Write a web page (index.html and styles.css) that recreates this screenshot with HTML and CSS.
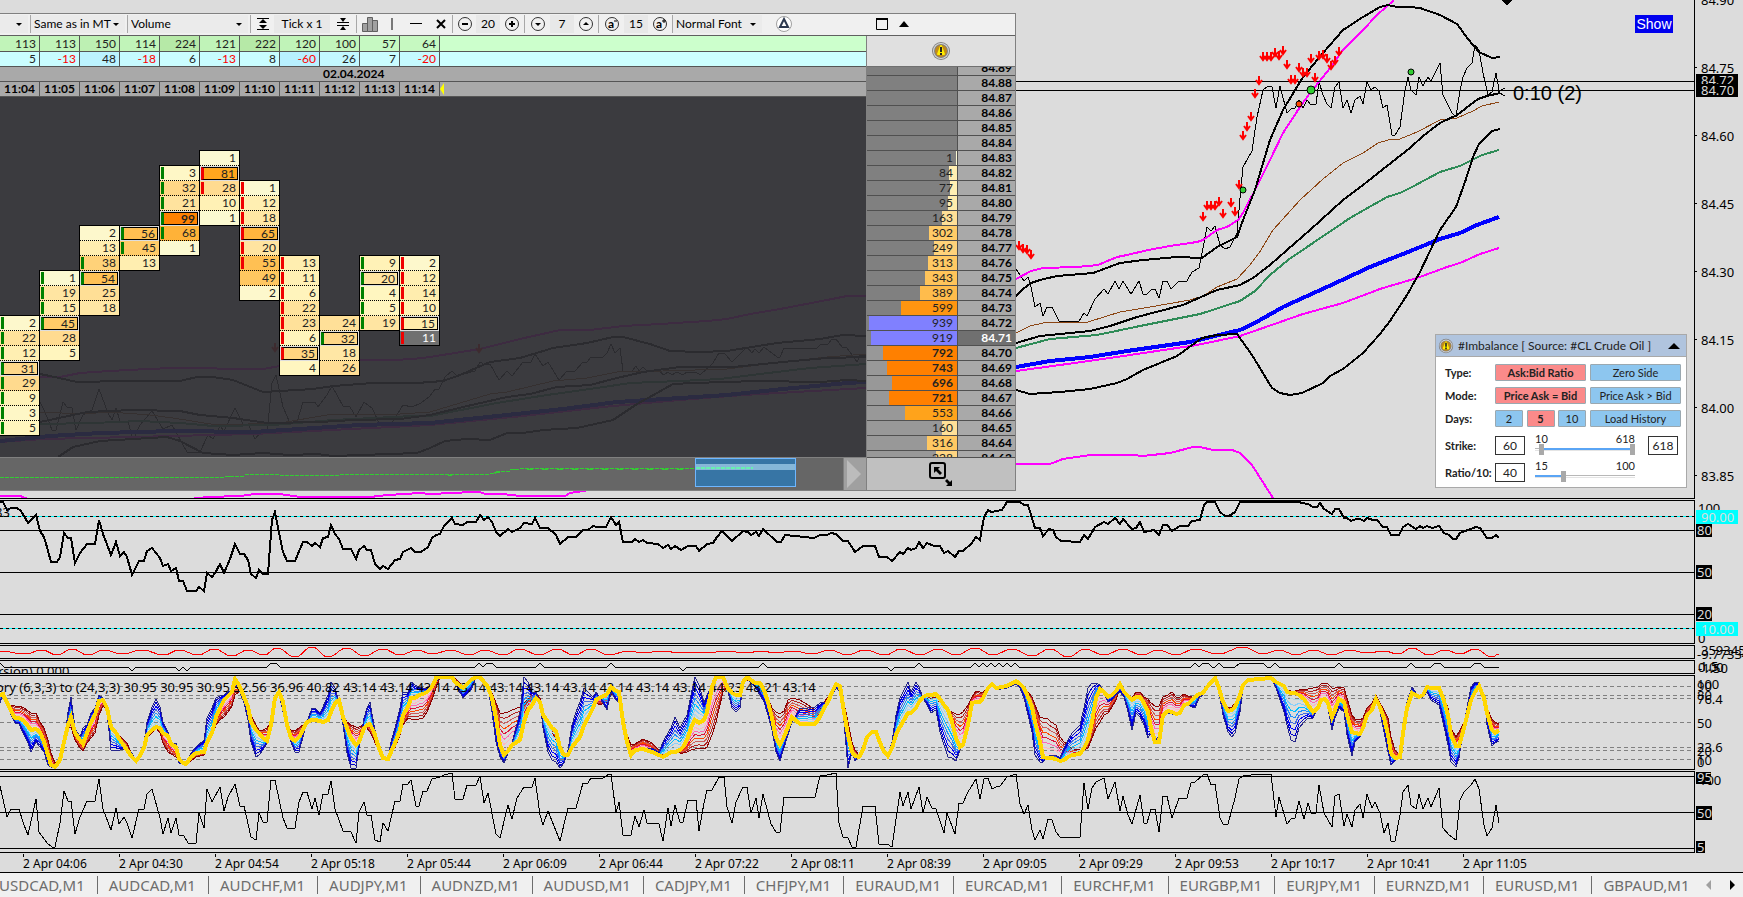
FILE: index.html
```
<!DOCTYPE html>
<html lang="en">
<head>
    <meta charset="UTF-8">
    <meta name="viewport" content="width=device-width, initial-scale=1.0">
    <title>Crude Oil M1</title>
    <link rel="stylesheet" href="styles.css">
</head>
<body>
    <svg class="defs" width="0" height="0">
        <defs>
            <path id="arrow" d="M0 -4V4M-3 0L0 4L3 0" fill="none" stroke="#ff0000" stroke-width="2"/>
            <g id="alert">
                <circle cx="10" cy="10" r="9" fill="#808080"/>
                <circle cx="10" cy="10" r="8" fill="#d8d8d8"/>
                <circle cx="10" cy="10" r="7" fill="#808080"/>
                <circle cx="10" cy="10" r="6" fill="#c08a1c"/>
                <path d="M10 5L13 13H7Z" fill="#ffee00" stroke="#ffee00" stroke-width="2" stroke-linejoin="round"/>
                <path d="M10 6V11M10 12V14" stroke="#222222" stroke-width="2"/>
            </g>
        </defs>
    </svg>

    <main class="charts">
        <section class="panel main-panel">
            <svg class="plot">
                <g class="lines">
                    <!-- price -->
                    <polyline class="thin" points="40,402 45,412 52,430 56,430 63,402 67,407 72,408 76,430 83,415 92,410 99,389 108,413 112,420 116,408 120,421 128,421 133,440 140,425 152,411 163,429 172,425 187,452 200,452 208,435 213,439 220,426 224,431 235,408 243,424 248,424 255,439 260,433 267,434 272,383 276,375 283,407 290,423 297,422 303,402 315,402 318,407 327,395 332,386 343,406 350,407 356,417 364,402 372,408 380,425 392,423 403,405 412,407 421,403 430,396 435,389 439,389 445,377 452,371 457,376 475,371 480,362 485,365 490,364 499,380 507,371 512,376 523,362 531,362 535,354 543,366 548,362 559,380 567,371 575,371 583,362 587,362 591,357 603,357 607,353 611,344 615,353 620,348 623,371 632,371 636,366 639,371 643,367 647,371 660,372 664,375 668,372 672,375 677,372 683,375 687,372 696,372 700,375 713,363 719,353 725,354 732,362 747,347 752,353 755,349 759,353 764,347 777,357 780,357 784,348 817,348 820,345 828,344 832,339 836,339 842,347 847,348 857,362 860,355 866,355"/>
                    <polyline class="thin" points="1016,269 1024,281 1028,277 1031,287 1035,307 1040,303 1043,316 1047,307 1052,307 1059,321 1079,321 1084,313 1087,316 1095,299 1104,289 1108,294 1115,281 1119,289 1123,281 1131,294 1139,281 1143,294 1147,294 1152,289 1155,289 1159,298 1163,281 1167,281 1171,289 1179,281 1187,281 1192,272 1199,268 1203,248 1207,227 1211,231 1215,226 1220,245 1225,249 1230,247 1237,233 1241,187 1243,167 1252,151 1257,117 1263,90 1268,86 1272,87 1276,108 1280,86 1287,113 1292,108 1295,108 1299,100 1303,108 1307,100 1311,105 1316,104 1319,82 1323,95 1327,104 1331,108 1335,87 1339,82 1343,108 1347,100 1351,113 1355,100 1360,96 1363,104 1367,82 1371,90 1375,87 1379,91 1383,108 1387,105 1392,135 1395,135 1400,127 1405,90 1408,77 1411,90 1416,95 1419,77 1423,86 1428,77 1431,81 1440,63 1443,95 1452,113 1456,117 1460,90 1463,77 1467,68 1472,63 1475,45 1479,50 1483,73 1488,95 1492,92 1496,73 1499,90"/>
                    <!-- moving averages -->
                    <polyline class="thin brown" points="0,418 40,412 83,414 110,412 150,415 173,418 217,425 280,423 333,414 400,414 430,412 490,394 507,392 553,381 587,378 617,372 663,371 727,369 783,362 827,357 866,354 940,345 1016,333 1030,326 1043,323 1060,322 1088,322 1120,312 1150,307 1190,300 1203,296 1217,287 1237,279 1250,265 1261,250 1273,230 1300,200 1323,179 1343,163 1363,153 1378,143 1388,140 1400,139 1417,132 1440,120 1457,118 1473,111 1482,106 1499,102"/>
                    <polyline class="green" points="0,428 40,424 93,423 140,421 180,423 213,426 273,425 333,420 413,416 430,416 497,403 547,395 597,388 630,383 680,381 720,379 760,374 810,368 866,364 1016,348 1050,339 1097,335 1140,326 1200,314 1240,301 1255,291 1270,275 1288,260 1310,245 1350,218 1387,197 1400,193 1412,187 1440,172 1460,166 1482,155 1499,150"/>
                    <polyline class="magenta" points="0,442 43,439 133,437 253,434 430,425 523,416 603,407 680,400 743,395 866,388 1016,371 1060,365 1110,358 1197,345 1240,336 1263,328 1303,314 1343,303 1380,289 1390,286 1417,278 1447,267 1460,263 1480,254 1499,248"/>
                    <polyline class="blue" points="0,441 50,436 100,433 140,432 173,431 253,432 300,429 360,425 430,423 507,415 563,409 617,402 680,398 727,395 783,389 847,383 866,382 1016,367 1050,361 1090,357 1127,351 1190,342 1240,330 1253,324 1283,307 1327,287 1370,267 1390,259 1403,254 1440,239 1460,233 1477,225 1499,217"/>
                    <polyline points="0,432 40,422 87,412 133,410 180,411 200,415 233,418 267,423 320,422 353,420 400,419 430,415 463,407 507,397 530,394 557,387 590,385 617,378 643,372 680,367 733,367 783,362 827,358 866,357 1016,343 1040,336 1090,331 1110,326 1137,317 1183,305 1217,290 1240,285 1253,278 1270,265 1287,250 1310,230 1343,200 1363,185 1387,166 1410,148 1423,136 1440,123 1457,115 1478,99 1487,96 1500,93"/>
                    <!-- bands -->
                    <polyline class="magenta" points="0,380 40,377 60,377 80,373 110,371 147,369 173,368 200,368 233,369 263,369 280,366 333,362 360,360 393,360 413,359 430,357 480,349 520,339 560,330 590,330 623,326 660,324 707,321 727,319 750,314 780,309 827,300 847,296 866,296 1016,279 1031,271 1043,268 1077,267 1098,265 1117,257 1127,255 1148,250 1170,246 1197,242 1203,240 1217,230 1227,227 1238,220 1243,213 1255,190 1270,160 1283,133 1300,107 1310,93 1327,72 1343,50 1363,30 1377,15 1394,0"/>
                    <polyline points="0,370 40,374 50,376 77,382 123,381 180,381 197,377 213,377 233,380 263,392 280,391 313,389 333,386 373,383 417,383 443,381 460,375 490,362 520,358 553,348 587,343 613,337 623,337 650,344 670,351 700,352 727,351 777,343 820,339 843,335 866,336 1016,296 1023,289 1031,283 1040,280 1057,276 1093,273 1120,263 1143,260 1177,257 1202,258 1217,247 1237,237 1243,220 1255,190 1270,140 1283,110 1303,77 1323,53 1343,30 1363,17 1380,7 1388,5 1397,7 1410,7 1420,8 1440,15 1457,24 1468,39 1479,52 1492,58 1500,57"/>
                    <polyline points="58,457 73,447 100,441 133,439 167,437 180,441 203,453 233,455 263,453 290,455 317,454 333,456 417,453 430,448 445,441 467,439 490,440 507,433 523,433 543,430 577,428 613,420 637,404 657,393 673,384 693,383 757,381 820,382 847,380 866,381 1016,390 1030,394 1060,392 1090,389 1117,383 1127,379 1143,370 1177,356 1202,338 1217,335 1237,334 1252,355 1272,388 1280,393 1290,395 1302,393 1323,383 1330,376 1343,369 1363,353 1380,334 1390,321 1407,295 1420,272 1440,230 1456,207 1465,182 1473,157 1479,144 1492,131 1500,129"/>
                    <polyline class="magenta" points="0,496 20,496 28,499 190,499 208,497 240,496 255,494 280,494 300,497 370,497 388,495 420,493 430,494 473,492 480,492 485,494 503,494 520,496 565,496 570,493 583,491 700,470 860,464 1016,464 1050,464 1063,459 1090,455 1133,455 1143,456 1170,453 1193,447 1200,447 1213,450 1232,450 1240,453 1252,465 1273,498"/>
                    <path class="thin" d="M1016 81.500H1694M1016 90.500H1694"/>
                </g>
                <g id="arrows"></g>
                <g stroke="#000000" fill="#32cd32">
                    <circle cx="1243" cy="190" r="3"/>
                    <circle cx="1311" cy="90" r="4"/>
                    <circle cx="1411" cy="72" r="3"/>
                    <circle cx="1299" cy="104" r="3" fill="#ff4500"/>
                </g>
                <path d="M1501 0H1512L1507 5Z"/>
                <path d="M1505 88L1498 92L1505 96" fill="none" stroke="#000000"/>
                <text class="countdown" x="1513" y="100">0:10 (2)</text>
            </svg>
            <div class="axis price-axis">
                <span>84.90</span><span>84.75</span><span>84.60</span><span>84.45</span><span>84.30</span><span>84.15</span><span>84.00</span><span>83.85</span>
                <b class="tag ask">84.72</b>
                <b class="tag bid">84.70</b>
            </div>
            <button class="show" type="button">Show</button>
        </section>

        <section class="panel rsi">
            <svg class="plot">
                <path class="level" d="M0 29.500H1694M0 71.500H1694M0 113.500H1694"/>
                <path d="M0 15.500H1694M0 127.500H1694" stroke="#00ffff"/>
                <path d="M0 15.500H1694M0 127.500H1694" stroke="#000000" stroke-dasharray="3 3"/>
                <text x="-5" y="16">83</text>
                <polyline class="heavy" points="0,1 3,1 7,9 11,7 17,7 21,10 28,22 36,14 40,30 44,36 47,46 51,61 57,61 60,56 64,32 68,37 71,37 75,62 80,52 87,43 95,43 99,19 103,33 111,54 116,41 120,55 124,51 127,56 132,74 139,60 144,60 147,50 152,47 160,57 163,65 168,63 171,70 176,67 179,80 183,80 187,90 196,90 199,86 204,90 207,72 212,76 215,72 220,63 224,72 230,58 235,43 240,53 244,53 248,59 251,73 256,77 259,69 263,73 268,73 272,19 275,11 283,51 287,60 295,60 303,41 307,41 312,45 315,42 320,46 323,37 328,36 331,24 335,33 339,38 343,48 351,48 356,58 359,49 364,45 367,49 371,49 375,63 380,68 383,65 388,68 395,59 400,58 403,51 411,47 415,51 421,51 428,46 432,37 436,34 440,33 444,25 452,17 455,23 463,24 467,21 476,21 480,14 484,19 488,16 492,21 496,31 500,35 508,28 512,31 520,27 524,22 532,23 535,17 540,27 548,27 556,34 560,43 568,36 576,36 583,29 588,29 593,25 597,26 606,26 611,16 616,24 619,21 623,41 632,41 635,38 639,41 643,39 647,42 658,43 663,47 668,44 671,48 675,45 681,49 688,45 696,45 699,50 707,43 713,42 717,36 722,30 732,40 743,30 748,31 751,34 756,31 759,35 763,28 777,41 781,41 785,34 814,37 820,34 827,34 831,32 836,33 843,40 848,40 855,51 863,45 875,45 879,56 887,56 892,60 900,51 903,53 908,47 911,49 916,47 919,41 923,47 927,42 934,45 940,45 944,52 948,50 955,56 959,50 963,50 971,43 976,36 980,39 984,16 988,9 991,11 1002,9 1007,1 1020,1 1024,4 1028,4 1035,27 1040,27 1043,35 1049,28 1053,29 1056,36 1061,40 1080,41 1084,34 1088,38 1095,26 1104,21 1108,23 1115,17 1120,23 1123,18 1132,28 1136,27 1140,21 1144,31 1154,29 1159,34 1163,24 1167,24 1172,30 1180,25 1188,25 1192,20 1200,19 1204,4 1207,1 1215,1 1220,11 1225,15 1229,15 1235,11 1240,1 1299,1 1302,2 1308,3 1313,6 1317,6 1320,2 1324,8 1332,13 1335,8 1339,8 1344,17 1347,17 1351,20 1356,18 1360,18 1364,20 1367,17 1373,19 1377,19 1383,26 1387,26 1391,34 1399,34 1403,26 1408,23 1416,28 1420,25 1423,27 1427,25 1432,27 1439,25 1444,32 1449,34 1453,38 1456,38 1460,32 1468,29 1476,26 1480,27 1487,37 1492,37 1496,34 1499,37"/>
            </svg>
            <svg class="axis">
                <text x="3" y="12">100</text>
                <text x="3" y="142">0</text>
                <rect x="1" y="22" width="16" height="14"/><text class="inv" x="2" y="34">80</text>
                <rect x="1" y="64" width="16" height="14"/><text class="inv" x="2" y="76">50</text>
                <rect x="1" y="106" width="16" height="14"/><text class="inv" x="2" y="118">20</text>
                <rect x="1" y="9" width="42" height="14" fill="#00ffff"/><text class="inv" x="6" y="21">90.00</text>
                <rect x="1" y="121" width="42" height="14" fill="#00ffff"/><text class="inv" x="6" y="133">10.00</text>
            </svg>
        </section>

        <section class="panel strip">
            <svg class="plot"><path id="wave" fill="none" stroke="#ff0000"/></svg>
            <svg class="axis"><text x="6" y="9">359345</text><text x="2" y="13">-9.773346</text></svg>
        </section>

        <section class="panel strip">
            <svg class="plot">
                <text x="-2" y="15">rsion) 0.000</text>
                <polyline class="thin" points="0,2 4,6 128,6 132,10 136,6 175,6 179,10 183,6 187,10 191,6 267,6 271,2 276,2 280,6 475,6 479,2 483,6 487,2 492,2 496,6 536,6 540,2 544,6 607,6 611,2 615,6 679,6 683,10 687,6 759,6 763,2 767,6 887,6 891,10 895,6 915,6 919,2 923,6 971,6 975,2 979,6 983,2 987,6 991,2 995,6 999,2 1003,6 1007,2 1011,6 1015,2 1019,6 1191,6 1195,2 1199,6 1203,2 1208,2 1212,6 1215,6 1219,2 1223,6 1235,6 1240,2 1263,2 1267,6 1271,6 1275,2 1279,6 1335,6 1339,2 1343,6 1407,6 1411,2 1415,6 1431,6 1435,2 1440,2 1444,6 1471,6 1475,2 1480,2 1484,6 1499,6"/>
            </svg>
            <svg class="axis"><text x="5" y="10">1.5</text><text x="3" y="11">0.00</text><text x="3" y="12">-1.50</text></svg>
        </section>

        <section class="panel stoch">
            <svg class="plot">
                <path d="M0 10.500H1694M0 19.500H1694M0 22.500H1694M0 46.500H1694M0 71.500H1694M0 74.500H1694M0 83.500H1694" stroke="#808080" stroke-dasharray="4 3"/>
                <g id="fan" fill="none"></g>
                <text x="-4" y="16">ory (6,3,3) to (24,3,3) 30.95 30.95 30.95 32.56 36.96 40.82 43.14 43.14 43.14 43.14 43.14 43.14 43.14 43.14 43.14 43.14 44.23 48.21 43.14</text>
                <g id="signal" fill="none"></g>
            </svg>
            <svg class="axis">
                <text x="2" y="13">100</text><text x="2" y="15">90</text><text x="2" y="24">80</text><text x="2" y="28">76.4</text>
                <text x="2" y="52">50</text><text x="2" y="76">23.6</text><text x="2" y="80">20</text><text x="2" y="89">10</text><text x="2" y="91">0</text>
            </svg>
        </section>

        <section class="panel fast">
            <svg class="plot">
                <path class="level" d="M0 4.500H1694M0 40.500H1694M0 76.500H1694"/>
                <polyline class="thin" points="0,14 7,45 11,37 19,37 24,53 28,63 36,27 39,60 47,71 52,75 55,75 60,51 64,19 68,29 71,29 75,62 80,45 87,29 95,29 99,7 103,37 111,58 116,36 119,52 124,45 127,51 132,66 139,37 144,37 147,22 152,17 160,46 163,62 168,46 171,61 176,46 179,63 184,64 188,71 196,71 199,41 204,56 207,17 212,30 220,15 224,39 228,25 235,12 240,34 244,34 251,65 256,68 259,41 263,50 267,50 271,8 275,8 283,46 287,56 295,56 299,30 303,20 307,20 312,37 315,26 319,43 323,22 328,22 331,9 335,37 343,59 351,60 356,71 359,40 364,30 367,43 371,43 375,68 380,70 383,51 388,59 395,29 400,29 403,12 408,12 411,8 416,34 419,34 423,19 427,19 432,7 440,5 444,3 452,1 455,27 463,27 467,13 476,13 480,4 484,31 488,21 496,62 500,66 508,33 512,47 517,26 524,15 532,15 535,6 540,43 543,53 548,39 560,69 568,36 576,36 583,11 588,11 591,6 603,6 609,2 611,2 616,41 619,30 623,63 631,63 635,44 639,55 644,38 647,51 659,52 663,69 668,36 671,54 675,33 680,50 683,50 688,28 696,28 699,59 704,31 707,18 712,18 719,5 724,5 727,35 732,51 736,30 743,15 747,15 751,41 756,26 759,46 763,22 771,52 776,60 780,60 784,25 815,25 820,4 827,3 836,1 839,51 843,65 848,66 852,75 856,75 863,34 875,34 879,72 887,72 892,75 900,20 903,34 908,20 911,37 919,15 923,41 927,25 932,36 936,37 944,61 947,41 955,62 959,31 963,31 968,20 976,7 980,27 984,7 988,6 992,17 996,15 1000,14 1007,5 1016,2 1020,32 1024,42 1028,33 1032,58 1035,68 1040,58 1043,67 1048,47 1052,48 1056,60 1060,65 1080,65 1084,11 1088,37 1092,16 1096,10 1104,6 1108,27 1115,10 1120,39 1123,24 1128,43 1132,52 1140,23 1144,51 1147,51 1151,37 1155,37 1159,60 1163,24 1167,24 1172,46 1179,26 1187,26 1191,11 1195,10 1203,3 1207,2 1211,13 1215,12 1220,46 1223,52 1228,52 1235,26 1239,7 1243,4 1260,2 1271,2 1276,45 1279,25 1287,52 1291,47 1295,46 1299,29 1304,47 1308,31 1311,41 1316,41 1319,13 1324,41 1332,55 1335,24 1339,22 1344,54 1347,42 1352,55 1355,38 1360,32 1363,46 1367,22 1372,36 1375,30 1380,41 1384,61 1388,51 1391,69 1395,69 1400,43 1403,20 1408,13 1411,33 1416,37 1419,22 1423,37 1428,26 1431,35 1439,16 1443,56 1449,63 1456,68 1460,28 1464,20 1471,13 1475,7 1479,17 1484,53 1487,64 1492,56 1496,33 1499,51"/>
            </svg>
            <svg class="axis">
                <rect x="1" y="0" width="15" height="12"/><text x="4" y="13">100</text><text class="inv" x="2" y="10">95</text>
                <rect x="1" y="34" width="16" height="14"/><text class="inv" x="2" y="46">50</text>
                <rect x="1" y="69" width="9" height="12"/><text class="inv" x="2" y="80">5</text>
            </svg>
        </section>

        <div class="times">
            <span>2 Apr 04:06</span><span>2 Apr 04:30</span><span>2 Apr 04:54</span><span>2 Apr 05:18</span><span>2 Apr 05:44</span><span>2 Apr 06:09</span><span>2 Apr 06:44</span><span>2 Apr 07:22</span><span>2 Apr 08:11</span><span>2 Apr 08:39</span><span>2 Apr 09:05</span><span>2 Apr 09:29</span><span>2 Apr 09:53</span><span>2 Apr 10:17</span><span>2 Apr 10:41</span><span>2 Apr 11:05</span>
        </div>
    </main>

    <nav class="tabs">
        <div class="tab-list">
            <a href="#">USDCAD,M1</a><a href="#">AUDCAD,M1</a><a href="#">AUDCHF,M1</a><a href="#">AUDJPY,M1</a><a href="#">AUDNZD,M1</a><a href="#">AUDUSD,M1</a><a href="#">CADJPY,M1</a><a href="#">CHFJPY,M1</a><a href="#">EURAUD,M1</a><a href="#">EURCAD,M1</a><a href="#">EURCHF,M1</a><a href="#">EURGBP,M1</a><a href="#">EURJPY,M1</a><a href="#">EURNZD,M1</a><a href="#">EURUSD,M1</a><a href="#">GBPAUD,M1</a>
        </div>
        <button type="button" aria-label="Scroll left"><svg width="6" height="10"><path d="M5 0V10L0 5Z" fill="#a0a0a0"/></svg></button>
        <button type="button" aria-label="Scroll right"><svg width="6" height="10"><path d="M1 0V10L6 5Z"/></svg></button>
    </nav>

    <!-- cluster window -->
    <div class="window">
        <div class="toolbar">
            <div class="pick first"><select aria-label="Symbol"><option></option></select></div>
            <div class="pick source"><select aria-label="Timeframe"><option>Same as in MT</option></select></div>
            <div class="pick kind"><select aria-label="Data"><option>Volume</option></select></div>
            <button class="w24 sep" type="button" aria-label="Expand"><svg width="14" height="14"><path d="M1 1.500H13M1 12.500H13" stroke="#000000"/><path d="M7 2L11 6H3ZM7 12L11 8H3Z"/></svg></button>
            <output class="tick">Tick x 1</output>
            <button class="w26" type="button" aria-label="Compress"><svg width="14" height="14"><path d="M1 5.500H13M1 8.500H13" stroke="#000000"/><path d="M7 5L10 1H4ZM7 9L10 13H4Z"/></svg></button>
            <button class="w26 sep" type="button" aria-label="Histogram"><svg width="18" height="18"><path d="M1.500 8.500H6.500V16.500H1.500ZM6.500 2.500H11.500V16.500H6.500ZM11.500 5.500H16.500V16.500H11.500Z" fill="#a0a0a0" stroke="#606060"/></svg></button>
            <button class="w20" type="button" aria-label="Vertical line"><svg width="2" height="12"><path d="M1 0V12" stroke="#000000" stroke-width="1"/></svg></button>
            <button class="w28" type="button" aria-label="Horizontal line"><svg width="12" height="3"><path d="M0 1.500H12" stroke="#000000"/></svg></button>
            <button class="w22" type="button" aria-label="Clear"><svg width="10" height="10"><path d="M1 1L9 9M9 1L1 9" stroke="#000000" stroke-width="2"/></svg></button>
            <button class="w24 sep" type="button" aria-label="Less"><svg width="16" height="16"><circle cx="8" cy="8" r="6.500" fill="none" stroke="#333333"/><path d="M5 8H11" stroke="#000000" stroke-width="2"/></svg></button>
            <output class="w24">20</output>
            <button class="w24" type="button" aria-label="More"><svg width="16" height="16"><circle cx="8" cy="8" r="6.500" fill="none" stroke="#333333"/><path d="M5 8H11M8 5V11" stroke="#000000" stroke-width="2"/></svg></button>
            <button class="w26 sep" type="button" aria-label="Lower"><svg width="16" height="16"><circle cx="8" cy="8" r="6.500" fill="none" stroke="#333333"/><path d="M5 7H11L8 10Z"/></svg></button>
            <output class="w24">7</output>
            <button class="w24" type="button" aria-label="Higher"><svg width="16" height="16"><circle cx="8" cy="8" r="6.500" fill="none" stroke="#333333"/><path d="M5 9H11L8 6Z"/></svg></button>
            <button class="w26 sep" type="button" aria-label="Smaller text"><svg width="16" height="16"><circle cx="8" cy="8" r="6.500" fill="none" stroke="#333333"/><text class="glyph" x="4" y="12">a</text><path d="M10 5H13" stroke="#000000"/></svg></button>
            <output class="w24">15</output>
            <button class="w24" type="button" aria-label="Larger text"><svg width="16" height="16"><circle cx="8" cy="8" r="6.500" fill="none" stroke="#333333"/><text class="glyph" x="4" y="12">a</text><path d="M10 5H14M12 3V7" stroke="#000000"/></svg></button>
            <div class="pick font"><select aria-label="Font"><option>Normal Font</option></select></div>
            <button class="w40" type="button" aria-label="Delta"><svg width="18" height="18"><circle cx="9" cy="9" r="7.500" fill="#ffffff" stroke="#a0a0a0"/><path d="M9 4L13 12H5Z" fill="none" stroke="#2e3a50" stroke-width="2"/></svg></button>
            <span class="spacer"></span>
            <button class="w20" type="button" aria-label="Maximize"><svg width="12" height="12"><path d="M0.500 1H11.500V11.500H0.500Z" fill="none" stroke="#000000"/><path d="M0 1H12" stroke="#000000" stroke-width="2"/></svg></button>
            <button class="w24" type="button" aria-label="Collapse"><svg width="10" height="6"><path d="M0 6H10L5 0Z"/></svg></button>
        </div>
        <div class="body">
            <div class="left">
                <table class="stats">
                    <tbody id="stats"></tbody>
                </table>
                <div class="clusters" id="clusters"></div>
                <div class="scroller">
                    <svg class="overview">
                        <path d="M0 19.500H225M225 18.500H245M245 16.500H280M280 17.500H340M340 16.500H452M452 17.500H448M440 16.500H490M490 15.500H496M496 13.500H510M510 11.500H520M520 10.500H695" stroke="#32cd32" stroke-dasharray="4 1"/>
                        <path d="M228 18.500H240M494 14.500H500M512 11.500H690" stroke="#32cd32" stroke-dasharray="6 9"/>
                        <rect x="695.500" y="0.500" width="100" height="28" fill="#3775a5" stroke="#6fb7ff"/>
                        <rect x="696" y="6" width="99" height="6" fill="#86b7d8"/>
                        <path d="M696 9.500H753" stroke="#66f0b0" stroke-width="2" stroke-dasharray="4 1"/>
                    </svg>
                    <button type="button" aria-label="Scroll to end"><svg width="14" height="28"><path d="M0 0L14 14L0 28Z" fill="#bcbcbc"/></svg></button>
                </div>
            </div>
            <div class="right">
                <div class="right-head"><svg width="20" height="20"><use href="#alert"/></svg></div>
                <div class="ladder">
                    <table>
                        <tbody id="ladder"></tbody>
                    </table>
                </div>
                <button class="right-foot" type="button" aria-label="Resize"><svg width="26" height="26"><rect x="2" y="2" width="15" height="15" rx="2" fill="none" stroke="#000000" stroke-width="2"/><path d="M6 6H12L10 8L14 12L12 14L8 10L6 12ZM24 25H18L20 23L17 20L19 18L22 21L24 19Z"/></svg></button>
            </div>
        </div>
    </div>

    <!-- imbalance settings -->
    <form class="imbalance">
        <header>
            <svg width="16" height="16" viewBox="0 0 20 20"><use href="#alert"/></svg>
            <h2>#Imbalance [ Source: #CL Crude Oil ]</h2>
            <button type="button" aria-label="Collapse panel"><svg width="12" height="6"><path d="M0 6H12L6 0Z"/></svg></button>
        </header>
        <div class="rows">
            <div class="row"><span>Type:</span><button class="on" type="button">Ask:Bid Ratio</button><button type="button">Zero Side</button></div>
            <div class="row"><span>Mode:</span><button class="on" type="button">Price Ask = Bid</button><button type="button">Price Ask &gt; Bid</button></div>
            <div class="row"><span>Days:</span><div class="days"><button type="button">2</button><button class="on" type="button">5</button><button type="button">10</button></div><button type="button">Load History</button></div>
            <div class="row field">
                <label for="strike">Strike:</label>
                <input class="num" id="strike" type="text" value="60">
                <div class="slide strike">
                    <div class="ends"><span>10</span><span>618</span></div>
                    <div class="track"><input type="range" min="0" max="100" value="4" aria-label="Strike from"><input type="range" min="0" max="100" value="100" aria-label="Strike to"></div>
                </div>
                <input class="num" type="text" value="618" aria-label="Strike maximum">
            </div>
            <div class="row field">
                <label for="ratio">Ratio/10:</label>
                <input class="num" id="ratio" type="text" value="40">
                <div class="slide ratio">
                    <div class="ends"><span>15</span><span>100</span></div>
                    <div class="track"><input type="range" min="15" max="100" value="38" aria-label="Ratio"></div>
                </div>
            </div>
        </div>
    </form>

    <script src="script.js"></script>
</body>
</html>
```

FILE: styles.css
```
* {
    box-sizing: border-box;
}

body {
    margin: 0;
    height: 100vh;
    display: flex;
    flex-direction: column;
    position: relative;
    overflow: hidden;
    background: #dcdcdc;
    color: #000000;
    font-family: "Noto Sans", "Open Sans", sans-serif;
    font-size: 13px;
}

button, input, select {
    font: inherit;
    color: inherit;
    margin: 0;
    padding: 0;
    border: none;
    background: none;
    border-radius: 0;
}

button {
    cursor: pointer;
}

svg {
    display: block;
}

.defs {
    position: absolute;
}

/* chart panels */
.charts {
    flex: 1;
    min-height: 0;
    display: flex;
    flex-direction: column;
    gap: 1px;
}

.panel {
    display: flex;
    flex: none;
    position: relative;
    overflow: hidden;
}

.plot {
    flex: 1;
    min-width: 0;
    height: 100%;
    border-top: 1px solid #000000;
    border-right: 1px solid #000000;
    border-bottom: 1px solid #000000;
}

.axis {
    width: 48px;
    height: 100%;
    flex: none;
}

.panel .axis {
    border-top: 1px solid transparent;
}

.main-panel {
    flex: 1 1 0;
    min-height: 0;
}

.main-panel .plot {
    border-top: none;
}

.main-panel .axis {
    border-top: none;
}

.rsi {
    height: 144px;
}

.strip {
    height: 14px;
}

.stoch {
    height: 95px;
}

.fast {
    height: 82px;
}

.plot path, .plot polyline {
    shape-rendering: crispEdges;
}

.lines polyline {
    fill: none;
    stroke: #000000;
    stroke-width: 2;
}

.lines path {
    fill: none;
}

.plot .thin {
    fill: none;
    stroke: #000000;
    stroke-width: 1;
}

.plot .heavy {
    fill: none;
    stroke: #000000;
    stroke-width: 2;
}

.plot .level {
    stroke: #000000;
}

.plot .brown {
    stroke: #8b4513;
}

.lines .green {
    stroke: #2e8b57;
}

.lines .magenta {
    stroke: #ff00ff;
}

.lines .blue {
    stroke: #0000ff;
    stroke-width: 4;
}

.countdown {
    font-family: "Liberation Sans", Arial, sans-serif;
    font-size: 20px;
}

.inv {
    fill: #dcdcdc;
}

.price-axis {
    position: relative;
    display: flex;
    flex-direction: column;
    overflow: hidden;
}

.price-axis span {
    height: 68px;
    flex: none;
    line-height: 68px;
    padding-left: 6px;
    background: linear-gradient(#000000, #000000) 0 33px / 2px 1px no-repeat;
}

.price-axis span:first-child {
    margin-top: -34px;
}

.tag {
    position: absolute;
    left: 1px;
    width: 42px;
    height: 13px;
    padding-left: 5px;
    line-height: 13px;
    font-weight: normal;
    background: #000000;
    color: #dcdcdc;
}

.ask {
    top: 74px;
}

.bid {
    top: 84px;
}

.show {
    position: absolute;
    top: 15px;
    right: 70px;
    width: 38px;
    height: 18px;
    background: #0000ee;
    color: #ffffff;
    font-family: "Liberation Sans", Arial, sans-serif;
    font-size: 14px;
    line-height: 18px;
}

.times {
    flex: none;
    display: flex;
    height: 18px;
    padding-left: 23px;
    overflow: hidden;
}

.times span {
    flex: none;
    width: 96px;
    font-size: 12px;
    line-height: 19px;
    background: linear-gradient(#000000, #000000) 0 0 / 1px 3px no-repeat;
}

/* bottom tabs */
.tabs {
    flex: none;
    height: 25px;
    display: flex;
    align-items: center;
    border-top: 1px solid #000000;
    background: #f0f0f0;
    overflow: hidden;
}

.tab-list {
    flex: 1;
    min-width: 0;
    display: flex;
    overflow: hidden;
    margin-left: -12px;
}

.tab-list a {
    padding: 0 12px 0 11px;
    border-right: 1px solid #6d6d6d;
    color: #6d6d6d;
    font-size: 15px;
    line-height: 18px;
    text-decoration: none;
    white-space: nowrap;
}

.tabs button {
    flex: none;
    width: 23px;
    display: flex;
    justify-content: center;
}

/* cluster window */
.window {
    position: absolute;
    left: 0;
    top: 13px;
    width: 1016px;
    border: 1px solid #808080;
    border-left: none;
    font-family: Lato, "Open Sans", sans-serif;
    font-size: 12px;
}

.toolbar {
    display: flex;
    align-items: center;
    height: 22px;
    padding: 0 99px 2px 0;
    background: #f0f0f0;
    border-bottom: 1px solid #606060;
}

.toolbar button {
    display: flex;
    align-items: center;
    justify-content: center;
    height: 18px;
}

.toolbar output {
    height: 18px;
    line-height: 18px;
    text-align: center;
    background: #e8e8e8;
}

.toolbar .w20 {
    width: 20px;
}

.toolbar .w22 {
    width: 22px;
}

.toolbar .w24 {
    width: 24px;
}

.toolbar .w26 {
    width: 26px;
}

.toolbar .w28 {
    width: 28px;
}

.toolbar .w40 {
    width: 40px;
}

.toolbar .sep {
    border-left: 1px solid #a8a8a8;
}

.tick {
    width: 56px;
}

.spacer {
    flex: 1;
}

.pick {
    position: relative;
    height: 18px;
    border-left: 1px solid #a8a8a8;
    background: #f0f0f0;
}

.pick select {
    width: 100%;
    height: 18px;
    padding-left: 3px;
    appearance: none;
    background: #ebebeb;
    border-right: 2px solid #f0f0f0;
}

.pick::after {
    content: "";
    position: absolute;
    right: 8px;
    top: 8px;
    border: 3px solid transparent;
    border-top-color: #000000;
    border-bottom: none;
}

.first {
    width: 30px;
    border-left: none;
}

.source {
    width: 97px;
}

.kind {
    width: 123px;
}

.font {
    width: 92px;
}

.glyph {
    font-size: 12px;
    font-weight: bold;
}

.body {
    display: flex;
}

.left {
    flex: 1;
    border-right: 1px solid #808080;
}

.right {
    width: 148px;
}

table {
    border-collapse: separate;
    border-spacing: 0;
    table-layout: fixed;
    width: 100%;
}

.stats td {
    height: 15px;
    padding: 0 3px 0 0;
    line-height: 14px;
    text-align: right;
    border-right: 1px solid #555555;
    border-bottom: 1px solid #555555;
    width: 40px;
    color: #222222;
}

.stats td:last-child {
    width: auto;
    border-right: none;
}

.stats tr:first-child td {
    height: 16px;
    line-height: 15px;
    background: #ccffcc;
}

.stats .delta td {
    background: #ccffff;
}

.stats td.neg {
    color: #ff0000;
}

.stats .date td, .stats .time td {
    background: #a9a9a9;
    color: #000000;
    font-weight: bold;
}

.stats .date td {
    padding-left: 323px;
    text-align: left;
}

.stats .time td {
    padding: 0;
    text-align: center;
}

.stats .time td:last-child {
    text-align: left;
}

.marker {
    display: block;
    width: 4px;
    height: 12px;
    border: 6px solid transparent;
    border-left: none;
    border-right: 4px solid #ffff00;
}

.clusters {
    height: 360px;
    padding-top: 8px;
    display: grid;
    grid-auto-rows: 15px;
    grid-template-columns: repeat(11, 40px);
    background: rgba(46, 46, 51, 0.93);
}

.column {
    width: 41px;
    margin-left: -1px;
    height: max-content;
    border: 1px solid #000000;
    border-bottom: none;
}

.cell {
    height: 15px;
    padding: 1px;
    border-bottom: 1px dotted #000000;
    line-height: 12px;
    text-align: right;
    color: #222222;
}

.cell:last-child {
    border-bottom: 1px solid #000000;
}

.cell span {
    display: block;
    height: 12px;
    padding-right: 2px;
}

.up span {
    border-left: 3px solid #008000;
}

.down span {
    border-left: 3px solid #f00000;
}

.cell.poc {
    padding: 0;
    border: 1px solid #dddddd;
}

.poc span {
    height: 13px;
    line-height: 12px;
    border-top: 1px solid #000000;
    border-right: 1px solid #000000;
    border-bottom: 1px solid #000000;
}

.hot {
    font-weight: bold;
}

.now {
    background: #707070;
    color: #ffffff;
}

.scroller {
    height: 33px;
    display: flex;
    border-top: 1px solid #808080;
    background: #666666;
}

.overview {
    flex: 1;
    height: 32px;
}

.overview path, .overview rect {
    shape-rendering: crispEdges;
}

.scroller button {
    width: 23px;
    padding-left: 3px;
    background: #a0a0a0;
    border-left: 1px solid #808080;
}

.right-head {
    height: 31px;
    display: flex;
    align-items: center;
    justify-content: center;
    background: #e0e0e0;
    border-bottom: 1px solid #707070;
}

.ladder {
    height: 390px;
    overflow: hidden;
    background: #a9a9a9;
}

.ladder table {
    margin-top: -6px;
}

.ladder td {
    height: 15px;
    padding: 0 4px 0 0;
    border-bottom: 1px solid #505050;
    border-right: 1px solid #505050;
    line-height: 14px;
    text-align: right;
}

.ladder .vol {
    width: 91px;
    background-color: #808080;
    background-position: right;
    background-repeat: no-repeat;
    color: #222222;
}

.ladder .low .vol {
    background-color: #989898;
}

.ladder .price {
    padding-right: 3px;
    border-right: none;
    background: #a9a9a9;
    font-weight: bold;
}

.ladder .last .price {
    background: #707070;
    color: #ffffff;
}

.right-foot {
    width: 100%;
    height: 33px;
    display: flex;
    justify-content: center;
    padding-top: 3px;
    background: #c0c0c0;
    border-top: 1px solid #505050;
}

/* imbalance settings */
.imbalance {
    position: absolute;
    top: 334px;
    right: 56px;
    width: 252px;
    height: 154px;
    border: 1px solid #a9a9a9;
    background: #ffffff;
    font-family: Lato, "Open Sans", sans-serif;
    font-size: 12px;
    color: #222222;
}

.imbalance header {
    display: flex;
    align-items: center;
    gap: 4px;
    height: 22px;
    padding: 0 6px 0 2px;
    background: #b0c4de;
    border-bottom: 1px solid #a9a9a9;
}

.imbalance h2 {
    flex: 1;
    margin: 0;
    font-size: 12px;
    font-weight: normal;
}

.rows {
    padding: 7px 5px 0 9px;
}

.row {
    display: flex;
    align-items: center;
    gap: 4px;
    height: 17px;
    margin-bottom: 6px;
}

.row > span, .row label {
    width: 46px;
    font-size: 11px;
    font-weight: bold;
    white-space: nowrap;
}

.row button {
    width: 91px;
    height: 17px;
    font-size: 11px;
    line-height: 14px;
    background: #8dc6ef;
    border: 1px solid #9aa8b0;
    border-radius: 1px;
}

.row button.on {
    background: #fb8a8a;
    font-weight: bold;
}

.days {
    width: 91px;
    display: flex;
    justify-content: space-between;
}

.row .days button {
    width: 28px;
}

.row.field {
    height: 27px;
    margin: 0;
    padding-bottom: 2px;
}

.num {
    width: 30px;
    height: 19px;
    border: 1px solid #333333;
    text-align: center;
}

.slide {
    width: 100px;
    height: 25px;
    margin: 0 9px 0 6px;
}

.ends {
    display: flex;
    justify-content: space-between;
    line-height: 11px;
    font-size: 11px;
}

.track {
    position: relative;
    height: 11px;
    background: linear-gradient(#b8b8b8, #b8b8b8) 0 4px / 100% 1px no-repeat, linear-gradient(#e4e4e4, #e4e4e4) 0 6px / 100% 1px no-repeat;
}

.strike .track::before, .ratio .track::before {
    content: "";
    position: absolute;
    left: 6px;
    right: 3px;
    top: 4px;
    height: 2px;
    background: #5aa5f5;
}

.ratio .track::before {
    left: 0;
    right: 72px;
}

.track input {
    position: absolute;
    inset: 0;
    width: 100%;
    height: 11px;
    appearance: none;
    pointer-events: none;
}

.track input::-webkit-slider-thumb {
    appearance: none;
    width: 5px;
    height: 11px;
    background: #a9a9a9;
    pointer-events: auto;
}
```

FILE: script.js
```
const NS = 'http://www.w3.org/2000/svg';

function svgEl(name, attrs, parent) {
    const el = document.createElementNS(NS, name);
    for (const key in attrs) {
        el.setAttribute(key, attrs[key]);
    }
    parent.appendChild(el);
    return el;
}

// colour scale from pale yellow to orange
const scale = [[0, 250, 250, 215], [4, 255, 246, 192], [13, 255, 238, 176], [20, 255, 228, 160], [30, 255, 217, 140], [45, 255, 203, 104], [66, 255, 180, 60], [82, 255, 165, 28], [100, 255, 128, 0]];

function heat(v) {
    v = Math.min(v, 100);
    let i = 1;
    while (scale[i][0] < v) {
        i++;
    }
    const a = scale[i - 1], b = scale[i];
    const t = (v - a[0]) / (b[0] - a[0]);
    return 'rgb(' + [1, 2, 3].map(k => Math.round(a[k] + (b[k] - a[k]) * t)).join(',') + ')';
}

// sell arrows
const arrows = '275,347 479,348 1019,245 1023,248 1027,249 1031,254 1203,216 1207,205 1211,205 1215,205 1219,201 1223,213 1231,202 1235,211 1239,184 1243,135 1247,126 1251,116 1255,93 1259,80 1263,56 1267,56 1271,56 1275,52 1279,55 1283,50 1287,64 1291,79 1295,79 1299,67 1303,72 1307,72 1311,58 1315,77 1319,55 1323,54 1327,58 1331,65 1335,60 1339,51';
arrows.split(' ').forEach(p => {
    const [x, y] = p.split(',');
    svgEl('use', { href: '#arrow', x: x, y: y }, document.getElementById('arrows'));
});

// red wave through its highs and lows
const extrema = '0,5 25,8 42,4 57,9 72,3 88,9 104,4 122,8 142,4 164,9 179,4 198,9 214,3 232,10 248,4 264,9 277,2 295,11 312,1 328,11 347,2 364,10 383,3 400,9 417,4 432,8 451,4 469,9 485,4 503,9 520,3 539,9 557,3 574,9 591,3 609,9 628,5 643,7 662,5 681,7 695,6 706,7 727,5 745,7 762,5 775,7 794,5 812,8 830,4 847,9 865,4 885,9 901,3 920,9 938,3 956,9 975,2 993,9 1012,3 1032,10 1050,3 1068,11 1085,3 1104,9 1123,3 1142,9 1158,4 1176,9 1195,3 1218,8 1243,1 1263,8 1279,4 1296,9 1313,4 1332,9 1349,4 1367,7 1384,5 1398,8 1412,2 1429,9 1445,4 1460,8 1475,3 1492,11 1499,8'.split(' ').map(p => p.split(',').map(Number));
let wave = 'M0 5';
for (let i = 1; i < extrema.length; i++) {
    const [x0, y0] = extrema[i - 1];
    const [x1, y1] = extrema[i];
    const mid = (x0 + x1) / 2;
    wave += `C${mid} ${y0} ${mid} ${y1} ${x1} ${y1}`;
}
document.getElementById('wave').setAttribute('d', wave);

// stochastic fan: x, signal, fast edge, slow edge
const fan = `0,19,27,17 3,18,19,18 8,29,32,29 15,42,47,30 19,42,48,30 24,45,59,32 28,50,67,35 31,54,76,37 36,53,66,37 40,56,71,46 44,66,76,52
48,79,89,64 51,89,91,77 55,91,91,87 60,84,86,86 64,66,67,66 68,49,36,51 71,41,21,51 75,57,52,64 80,64,61,72 83,68,52,75 87,57,49,67 91,46,37,62
95,39,32,57 99,25,19,39 103,24,22,30 107,32,36,34 111,51,74,49 116,57,74,60 120,64,74,60 127,74,72,67 132,81,77,79 136,85,87,84 139,81,81,81
144,72,67,72 147,59,46,62 152,54,31,57 156,51,23,52 160,52,31,57 163,57,46,67 168,60,56,76 171,68,69,78 176,71,67,81 179,83,87,82 183,87,87,86
186,88,88,87 191,81,77,85 196,77,71,81 204,76,64,79 207,66,42,70 212,57,32,59 216,41,22,49 220,32,20,44 224,24,19,41 228,20,16,36 232,16,15,30
235,3,9,19 240,11,16,15 244,21,27,19 248,31,44,29 251,46,66,39 256,54,81,49 259,57,79,54 263,62,74,54 267,65,67,52 271,49,46,46 275,22,24,26
279,16,17,17 283,26,36,27 287,49,52,49 291,62,66,54 295,65,76,55 299,61,76,52 303,54,61,49 307,46,46,46 312,44,32,44 315,44,32,46 320,45,37,45
323,46,31,46 328,44,19,41 331,36,6,36 335,27,12,27 339,24,27,26 343,41,49,39 347,52,77,46 351,62,92,49 356,69,92,51 359,66,72,51 364,52,42,49
367,49,32,52 370,48,26,56 374,56,49,64 379,72,72,76 383,82,81,81 388,83,82,82 391,76,66,76 395,67,52,72 400,54,32,59 403,39,16,49 408,31,16,42
411,22,6,43 415,22,9,43 419,19,11,43 423,18,12,42 427,16,12,36 432,11,10,24 436,2,6,12 440,1,1,1 452,1,1,1 455,6,7,2 463,12,22,11 471,4,14,6
476,1,2,2 480,1,1,1 484,6,7,4 488,11,12,9 492,22,36,17 496,42,66,27 500,69,81,37 504,79,87,37 508,75,77,36 512,69,67,34 520,64,36,31 524,46,1,27
528,34,6,24 532,29,16,16 536,22,16,17 540,26,26,22 543,39,52,36 548,46,76,47 552,52,84,56 556,55,86,64 560,72,92,72 564,79,87,79 568,79,74,80
572,71,49,71 576,66,36,66 580,61,26,61 584,49,12,49 588,42,16,44 593,32,21,34 596,24,16,27 600,22,22,29 607,18,34,26 611,11,16,19 616,15,24,15
619,16,26,19 623,46,54,39 627,66,69,59 631,79,78,69 635,74,74,68 643,73,74,63 652,76,72,67 659,79,76,74 663,81,66,78 668,78,57,77 671,76,52,76
675,76,41,76 680,74,52,77 683,71,46,77 687,64,39,76 691,52,19,74 695,44,1,73 699,47,9,72 704,44,27,73 707,36,19,71 712,11,9,59 716,1,2,46
723,1,1,16 727,11,11,11 732,17,32,16 736,19,36,18 740,19,32,17 743,6,9,7 747,1,2,4 755,7,11,6 760,7,19,9 764,14,26,12 768,26,39,22 772,42,54,32
776,62,76,36 780,69,85,38 784,61,72,35 788,51,59,24 792,41,46,22 800,48,32,24 808,48,32,29 815,48,31,34 820,41,27,34 824,32,26,26 828,26,26,21
832,16,19,19 836,8,12,9 840,10,16,12 844,36,46,27 848,59,92,46 852,76,76,66 855,80,85,74 859,81,81,79 863,74,74,74 867,61,61,61 872,56,56,56
876,56,56,56 879,64,64,64 883,74,74,74 888,80,80,80 892,72,66,71 896,59,39,59 900,51,22,49 908,37,6,37 911,37,16,37 916,32,6,32 919,26,11,26
923,21,22,23 927,19,29,22 931,19,37,22 936,18,34,21 940,23,56,27 944,29,69,32 948,34,81,35 952,46,82,36 956,62,85,38 960,71,74,38 963,69,66,36
968,49,41,29 972,27,29,21 976,26,26,15 980,26,26,16 983,22,22,16 988,12,12,11 992,8,8,8 996,12,14,11 1007,10,12,10 1016,5,8,6 1020,8,12,9
1024,12,22,12 1028,21,39,16 1032,31,56,21 1035,46,79,29 1040,66,86,41 1043,81,86,42 1047,82,81,42 1051,82,79,46 1056,83,79,49 1060,85,82,61
1064,84,72,66 1068,81,64,69 1072,79,57,73 1080,78,49,74 1084,72,32,74 1088,64,12,72 1092,46,7,62 1096,22,7,52 1100,13,9,46 1104,16,17,39
1108,21,26,37 1112,19,24,31 1116,15,19,24 1120,8,16,12 1124,16,21,16 1128,20,36,19 1132,24,54,22 1136,21,37,16 1140,21,41,16 1144,27,49,21
1148,36,62,23 1151,52,57,27 1155,66,64,30 1159,66,60,30 1163,39,41,21 1168,35,37,19 1172,36,38,16 1176,38,38,21 1180,37,36,21 1184,29,31,18
1188,28,29,20 1192,24,31,21 1195,21,32,21 1199,18,22,18 1203,17,19,17 1207,11,11,11 1215,2,4,3 1219,12,16,12 1223,26,39,22 1228,35,56,32
1232,34,61,31 1235,31,57,27 1240,19,36,17 1243,9,11,9 1248,4,4,4 1260,3,3,3 1271,2,2,2 1276,6,12,6 1284,10,36,12 1287,16,49,14 1291,17,64,15
1295,17,66,15 1299,19,52,14 1304,23,46,13 1308,29,42,13 1313,36,42,12 1318,32,32,11 1321,24,26,8 1325,23,23,7 1328,27,32,8 1332,41,54,12
1335,34,42,12 1339,23,32,11 1344,26,36,12 1347,39,59,22 1352,56,80,39 1355,57,66,43 1360,58,61,44 1363,52,52,42 1367,39,41,32 1372,34,32,27
1376,23,21,19 1380,31,36,27 1384,42,56,34 1388,59,76,42 1391,77,89,61 1395,82,85,74 1400,81,77,79 1403,57,49,52 1407,32,26,31 1412,17,11,17
1419,21,21,21 1423,19,21,17 1427,11,16,12 1431,12,24,12 1439,12,29,13 1443,22,46,19 1448,39,69,32 1451,59,86,52 1456,70,91,61 1459,70,82,56
1464,52,49,46 1468,36,26,32 1471,24,11,19 1475,16,6,11 1479,10,7,9 1484,22,19,19 1487,37,49,32 1492,54,70,43 1495,57,67,46 1499,54,65,48`.split(/\s+/).map(p => p.split(',').map(Number));

const cool = ['#add8e6', '#87cefa', '#00bfff', '#1e90ff', '#4169e1', '#0000ff', '#0000cd', '#27278b'];
const warm = ['#ffc0cb', '#ffb6c1', '#ff69b4', '#dc143c', '#ff4500', '#cd5c5c', '#b22222', '#8b0000'];

function fanLine(side, part, color, width, id) {
    const points = fan.map(p => p[0] + ',' + (p[1] + (p[side] - p[1]) * part).toFixed(1)).join(' ');
    svgEl('polyline', { points: points, stroke: color, 'stroke-width': width }, document.getElementById(id));
}

warm.forEach((color, i) => fanLine(3, (i + 1) / 8, color, 1, 'fan'));
cool.forEach((color, i) => fanLine(2, (i + 1) / 8, color, 1, 'fan'));
fanLine(2, 0, '#ffd700', 4, 'signal');

// header rows
const volumes = [113, 113, 150, 114, 224, 121, 222, 120, 100, 57, 64];
const deltas = [5, -13, 48, -18, 6, -13, 8, -60, 26, 7, -20];
const tint = v => `rgb(${204 - Math.round(v / 10)},${255 - Math.round(v / 10)},${204 - Math.round(v / 6)})`;
const cold = v => `rgb(${204 - Math.round(Math.abs(v) / 3)},${255 - Math.round(Math.abs(v) / 4)},255)`;
document.getElementById('stats').innerHTML =
    '<tr>' + volumes.map(v => `<td style="background:${tint(v)}">${v}</td>`).join('') + '<td></td></tr>' +
    '<tr class="delta">' + deltas.map(v => `<td class="${v < 0 ? 'neg' : ''}" style="background:${cold(v)}">${v}</td>`).join('') + '<td></td></tr>' +
    '<tr class="date"><td colspan="12">02.04.2024</td></tr>' +
    '<tr class="time">' + volumes.map((v, i) => `<td>11:${String(i + 4).padStart(2, '0')}</td>`).join('') + '<td><i class="marker"></i></td></tr>';

// clusters: first row, then cells (g = ask side, r = bid side, * = point of control)
const columns = [
    [15, '2g 22g 12g 31g* 29g 9g 3g 5g'],
    [12, '1g 19g 15g 45g* 28 5'],
    [9, '2 13 38g 54g* 25 18'],
    [9, '56g* 45g 13'],
    [5, '3g 32g 21g 99g* 68g 1'],
    [4, '1 81r* 28r 10 1'],
    [6, '1r 12r 18r 65r* 20r 55r 49 2'],
    [11, '13r 11r 6r 22r 23r 6r 35r* 4'],
    [15, '24 32g* 18 26'],
    [11, '9g 20g* 4g 5g 19g'],
    [11, '2r 12r 14r 10r 15r* 11r!']
];
document.getElementById('clusters').innerHTML = columns.map(([row, cells], i) => {
    const list = cells.split(' ');
    return `<div class="column" style="grid-area:${row}/${i + 1}/span ${list.length}">` + list.map(c => {
        const v = parseInt(c);
        let cls = 'cell';
        if (c.includes('g')) cls += ' up';
        if (c.includes('r')) cls += ' down';
        if (c.includes('*')) cls += ' poc';
        if (v > 90) cls += ' hot';
        if (c.includes('!')) return `<div class="${cls} now"><span>${v}</span></div>`;
        return `<div class="${cls}" style="background:${heat(v)}"><span>${v}</span></div>`;
    }).join('') + '</div>';
}).join('');

// price ladder
const ladder = ['', '', '', '', '', '', 1, 84, 77, 95, 163, 302, 249, 313, 343, 389, 599, 939, 919, 792, 743, 696, 721, 553, 160, 316, 228];
document.getElementById('ladder').innerHTML = ladder.map((v, i) => {
    const color = v > 900 ? '#8080ff' : heat(v * 0.15);
    const fill = v ? `background-image:linear-gradient(${color},${color});background-size:${Math.max(1, Math.round(v * 0.094))}px 100%` : '';
    const cls = (i > 18 ? 'low' : '') + (i === 18 ? 'last' : '');
    return `<tr class="${cls}"><td class="vol${v > 690 && v < 900 ? ' hot' : ''}" style="${fill}">${v}</td><td class="price">${(84.89 - i / 100).toFixed(2)}</td></tr>`;
}).join('');
```
